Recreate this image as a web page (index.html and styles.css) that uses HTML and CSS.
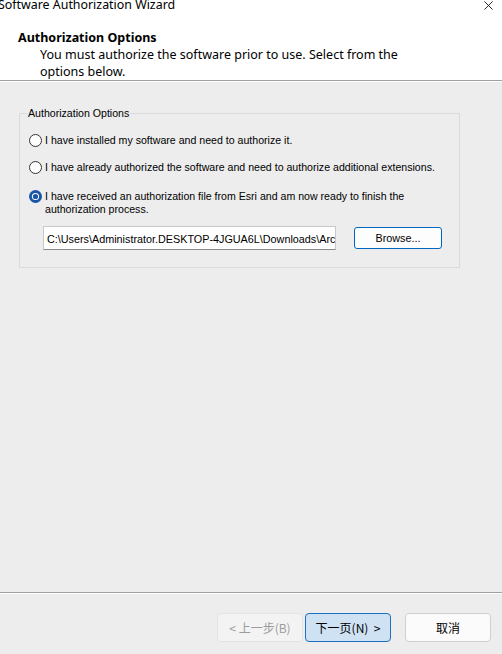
FILE: index.html
```html
<!DOCTYPE html>
<html>
<head>
<meta charset="utf-8">
<link rel="stylesheet" href="styles.css">
</head>
<body>
<div class="window">
  <div class="header">
    <div class="titlebar">
      <span class="title">Software Authorization Wizard</span>
      <svg class="close" width="10" height="10" viewBox="0 0 10 10"><path d="M0.5 0.5L9.5 9.5M9.5 0.5L0.5 9.5" stroke="#111" stroke-width="1"/></svg>
    </div>
    <div class="heading">Authorization Options</div>
    <div class="subtext">You must authorize the software prior to use. Select from the<br>options below.</div>
  </div>
  <div class="body">
    <fieldset class="group">
      <legend>Authorization Options</legend>
      <div class="option">
        <svg class="radio" width="13" height="13" viewBox="0 0 13 13"><circle cx="6.5" cy="6.5" r="6" fill="#fff" stroke="#333" stroke-width="1"/></svg>
        <span>I have installed my software and need to authorize it.</span>
      </div>
      <div class="option option-last">
        <svg class="radio" width="13" height="13" viewBox="0 0 13 13"><circle cx="6.5" cy="6.5" r="6" fill="#fff" stroke="#333" stroke-width="1"/></svg>
        <span>I have already authorized the software and need to authorize additional extensions.</span>
      </div>
      <div class="option option-multi">
        <svg class="radio" width="13" height="13" viewBox="0 0 13 13"><circle cx="6.5" cy="6.5" r="6.5" fill="#1a56a8"/><circle cx="6.5" cy="6.5" r="3.6" fill="#fff"/><circle cx="6.5" cy="6.5" r="2.6" fill="#1a56a8"/></svg>
        <span>I have received an authorization file from Esri and am now ready to finish the<br>authorization process.</span>
      </div>
      <div class="filerow">
        <div class="field">C:\Users\Administrator.DESKTOP-4JGUA6L\Downloads\ArcGIS</div>
        <div class="browse">Browse...</div>
      </div>
    </fieldset>
  </div>
  <div class="footer">
    <div class="btn btn-disabled">&lt;&nbsp;上一步(B)</div>
    <div class="btn btn-primary">下一页(N)&nbsp;&nbsp;&gt;</div>
    <div class="btn btn-cancel">取消</div>
  </div>
</div>
</body>
</html>
```
FILE: styles.css
```css
html, body {
  margin: 0;
  padding: 0;
}
body {
  width: 502px;
  height: 654px;
  overflow: hidden;
  background: #ededed;
  font-family: "Liberation Sans", Arial, sans-serif;
  color: #000;
}
.window {
  display: flex;
  flex-direction: column;
  height: 654px;
}
.header {
  background: #fff;
  height: 80px;
  border-bottom: 1px solid #a0a0a0;
  box-shadow: 0 1px 0 #fff;
  font-family: "Noto Sans", "Open Sans", sans-serif;
}
.titlebar {
  height: 13px;
  display: flex;
  justify-content: space-between;
  align-items: flex-start;
}
.title {
  font-size: 12.4px;
  line-height: 12px;
  margin-left: -2px;
  margin-top: -1px;
  color: #000;
}
.close {
  width: 9px;
  height: 9px;
  margin-top: 1px;
  margin-right: 9px;
}
.heading {
  margin-top: 16px;
  margin-left: 18px;
  font-weight: bold;
  font-size: 12.5px;
  line-height: 17px;
}
.subtext {
  margin-left: 40px;
  font-size: 12.5px;
  line-height: 17px;
  margin-top: 0;
}
.body {
  flex: 1;
  padding: 26px 0 0 19px;
  border-bottom: 1px solid #a0a0a0;
  box-shadow: 0 1px 0 #fff;
}
.group {
  width: 441px;
  height: 161px;
  box-sizing: border-box;
  margin: 0;
  padding: 14px 0 0 9px;
  border: 1px solid #dadada;
  font-size: 10.6px;
}
.group legend {
  padding: 0 1px;
  margin-left: -2px;
  font-size: 10.6px;
  line-height: 12px;
}
.option {
  display: flex;
  align-items: center;
  gap: 3px;
  height: 14px;
  margin-bottom: 13px;
  line-height: 13px;
}
.option-last {
  margin-bottom: 16px;
}
.option-multi {
  align-items: flex-start;
  height: 26px;
  margin-bottom: 0;
}
.radio {
  flex: none;
}
.filerow {
  display: flex;
  align-items: flex-start;
  margin-top: 10px;
  margin-left: 14px;
}
.field {
  width: 293px;
  height: 24px;
  box-sizing: border-box;
  background: #fff;
  border: 1px solid #c9c9c9;
  border-bottom-color: #8a8a8a;
  padding: 5px 0 0 3px;
  white-space: nowrap;
  overflow: hidden;
  font-size: 10.8px;
  line-height: 14px;
}
.browse {
  margin-left: 18px;
  margin-top: 1px;
  width: 88px;
  height: 22px;
  box-sizing: border-box;
  border: 1px solid #0067c0;
  border-radius: 3px;
  background: #fdfdfd;
  text-align: center;
  font-size: 10.8px;
  line-height: 20px;
}
.footer {
  height: 60px;
  display: flex;
  align-items: flex-start;
  padding: 19px 0 0 217px;
  box-sizing: border-box;
  margin-top: 1px;
}
.btn {
  width: 86px;
  height: 29px;
  box-sizing: border-box;
  border-radius: 4px;
  text-align: center;
  font-family: "Noto Sans CJK SC", "Noto Sans", sans-serif;
  font-size: 12px;
  line-height: 27px;
}
.btn-disabled {
  border: 1px solid #e3e3e3;
  background: #f3f3f3;
  color: #9c9c9c;
}
.btn-primary {
  margin-left: 2px;
  border: 1px solid #1d6fc4;
  background: #cfe2f4;
  color: #000;
}
.btn-cancel {
  margin-left: 14px;
  border: 1px solid #d0d0d0;
  background: #fbfbfb;
  color: #000;
}
```
